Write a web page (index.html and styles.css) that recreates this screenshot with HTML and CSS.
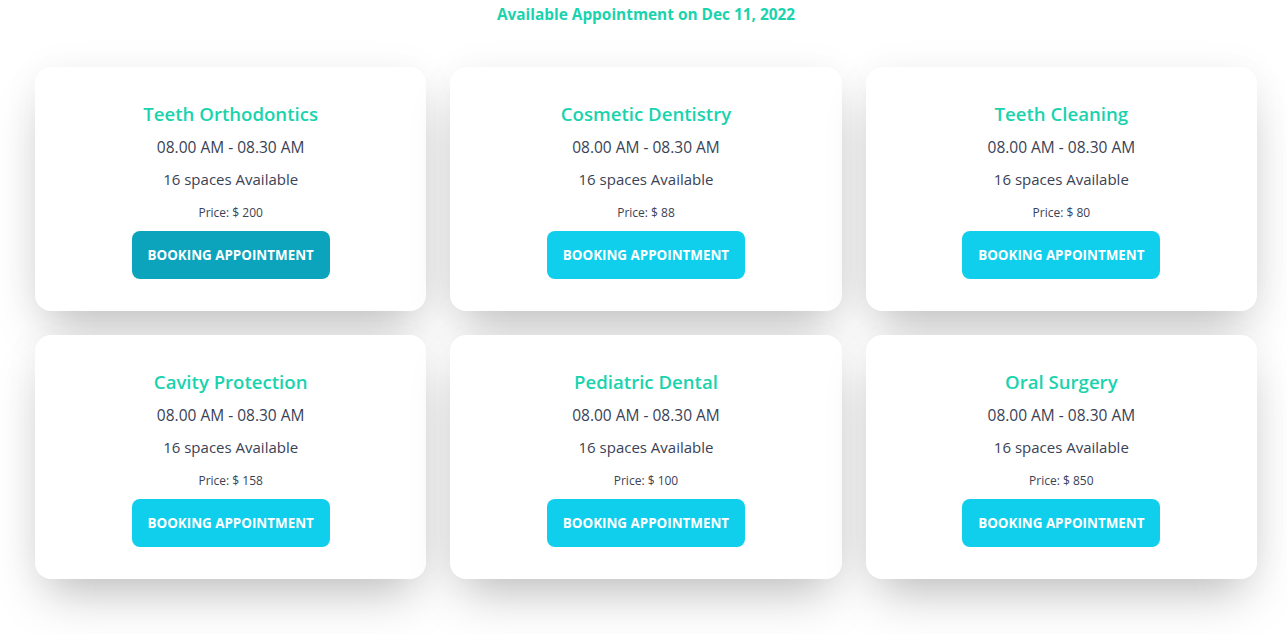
FILE: index.html
```html
<!DOCTYPE html>
<html lang="en">
<head>
<meta charset="utf-8">
<title>Available Appointments</title>
<link rel="stylesheet" href="styles.css">
</head>
<body>
<section class="appointments">
  <h2 class="heading">Available Appointment on Dec 11, 2022</h2>
  <div class="grid">
    <div class="card">
      <h3 class="card-title">Teeth Orthodontics</h3>
      <p class="time">08.00 AM - 08.30 AM</p>
      <p class="spaces">16 spaces Available</p>
      <p class="price">Price: $ 200</p>
      <div class="actions"><button class="btn btn-active">Booking Appointment</button></div>
    </div>
    <div class="card">
      <h3 class="card-title">Cosmetic Dentistry</h3>
      <p class="time">08.00 AM - 08.30 AM</p>
      <p class="spaces">16 spaces Available</p>
      <p class="price">Price: $ 88</p>
      <div class="actions"><button class="btn">Booking Appointment</button></div>
    </div>
    <div class="card">
      <h3 class="card-title">Teeth Cleaning</h3>
      <p class="time">08.00 AM - 08.30 AM</p>
      <p class="spaces">16 spaces Available</p>
      <p class="price">Price: $ 80</p>
      <div class="actions"><button class="btn">Booking Appointment</button></div>
    </div>
    <div class="card">
      <h3 class="card-title">Cavity Protection</h3>
      <p class="time">08.00 AM - 08.30 AM</p>
      <p class="spaces">16 spaces Available</p>
      <p class="price">Price: $ 158</p>
      <div class="actions"><button class="btn">Booking Appointment</button></div>
    </div>
    <div class="card">
      <h3 class="card-title">Pediatric Dental</h3>
      <p class="time">08.00 AM - 08.30 AM</p>
      <p class="spaces">16 spaces Available</p>
      <p class="price">Price: $ 100</p>
      <div class="actions"><button class="btn">Booking Appointment</button></div>
    </div>
    <div class="card">
      <h3 class="card-title">Oral Surgery</h3>
      <p class="time">08.00 AM - 08.30 AM</p>
      <p class="spaces">16 spaces Available</p>
      <p class="price">Price: $ 850</p>
      <div class="actions"><button class="btn">Booking Appointment</button></div>
    </div>
  </div>
</section>
</body>
</html>
```
FILE: styles.css
```css
* { box-sizing: border-box; }
html, body { margin: 0; padding: 0; background: #ffffff; }
body {
  font-family: "Open Sans", "Noto Sans", "Liberation Sans", sans-serif;
  color: #3a4256;
}
.appointments { padding: 3px 30px 64px 35px; }
.heading {
  margin: 0;
  text-align: center;
  font-size: 15.4px;
  line-height: 24px;
  font-weight: 700;
  color: #19d3ae;
}
.grid {
  margin-top: 40px;
  display: grid;
  grid-template-columns: repeat(3, 1fr);
  gap: 24px;
}
.card {
  background: #fff;
  border-radius: 16px;
  box-shadow: 0 25px 50px -12px rgba(0, 0, 0, 0.25), 0 0 40px rgba(0, 0, 0, 0.04);
  padding: 32px;
  display: flex;
  flex-direction: column;
  align-items: center;
  gap: 8px;
  text-align: center;
}
.card-title {
  margin: 0;
  padding-top: 1px;
  font-size: 18.6px;
  line-height: 28px;
  font-weight: 600;
  color: #19d3ae;
  height: 28px;
}
.time, .spaces {
  margin: 0;
  font-size: 15.5px;
  line-height: 24px;
  color: #3a4256;
}
.spaces { font-size: 15px; }
.price {
  margin: 0;
  padding-top: 2px;
  height: 24px;
  font-size: 12px;
  line-height: 24px;
  color: #3a4256;
}
.actions { display: flex; justify-content: center; }
.btn {
  height: 48px;
  width: 198px;
  border: 0;
  border-radius: 8px;
  background: #0fcfec;
  color: #fff;
  font-family: inherit;
  font-size: 13.4px;
  font-weight: 700;
  text-transform: uppercase;
  padding: 0 12px;
  cursor: pointer;
}
.btn-active { background: #0ba4bc; }
```
